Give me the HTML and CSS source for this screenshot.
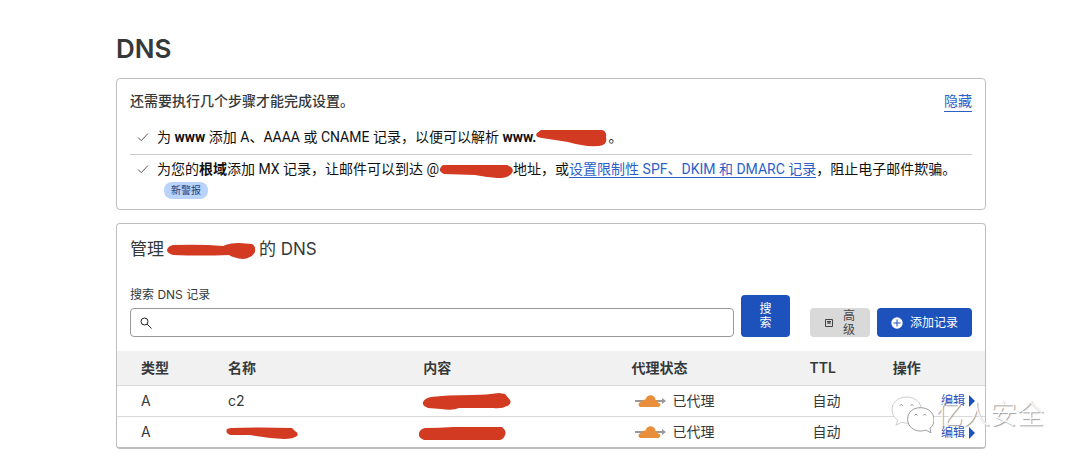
FILE: index.html
```html
<!DOCTYPE html>
<html lang="zh-CN">

<head>
    <meta charset="UTF-8">
    <meta name="viewport" content="width=device-width, initial-scale=1.0">
    <title>DNS</title>
    <link rel="stylesheet" href="styles.css">
</head>

<body>
    <main class="page">
        <h1>DNS</h1>

        <section class="card steps">
            <div class="steps-head">
                <h2>还需要执行几个步骤才能完成设置。</h2>
                <a href="#">隐藏</a>
            </div>
            <ul class="steps-list">
                <li>
                    <svg class="check" viewBox="0 0 12 12"><path d="M1 6.500l3.200 3.200L11 2.500" /></svg>
                    <p>为 <b>www</b> 添加 A、AAAA 或 CNAME 记录，以便可以解析 <b>www.</b><svg class="mark mark-host" viewBox="0 0 72 18"><path d="M5 1H66Q71 2 70 8Q72 16 63 17Q48 18 32 13L6 9Q-2 8 1 4Z" /></svg>。</p>
                </li>
                <li>
                    <svg class="check" viewBox="0 0 12 12"><path d="M1 6.500l3.200 3.200L11 2.500" /></svg>
                    <p>为您的<b>根域</b>添加 MX 记录，让邮件可以到达 @<svg class="mark mark-mail" viewBox="0 0 74 14"><path d="M4 1L68 1Q76 4 73 9Q70 14 58 14Q46 13 36 11L5 10Q-3 6 4 1Z" /></svg>地址，或<a href="#">设置限制性 SPF、DKIM 和 DMARC 记录</a>，阻止电子邮件欺骗。<br><span class="badge">新警报</span></p>
                </li>
            </ul>
        </section>

        <section class="card records">
            <h2>管理<svg class="mark mark-zone" viewBox="0 0 89 16"><path d="M6 2Q34 1 56 3Q62 0 72 0L85 1Q89 3 88 9Q85 15 76 16Q67 15 62 12Q34 13 6 12Q0 10 0 7Q1 3 6 2Z" /></svg>的 DNS</h2>

            <form class="toolbar">
                <div class="search-field">
                    <label for="search">搜索 DNS 记录</label>
                    <div class="search-box">
                        <svg viewBox="0 0 12 12"><circle cx="4.500" cy="4.500" r="3.500" /><path d="M7 7l4.500 4.500" /></svg>
                        <input type="text" id="search">
                    </div>
                </div>
                <button type="button" class="btn btn-search">搜索</button>
                <button type="button" class="btn btn-advanced">
                    <svg viewBox="0 0 8 8"><path d="M.5.5h7v7h-7z" /><path d="M2 2.500h4M2 4h4M4 2v3" /></svg>
                    <span>高级</span>
                </button>
                <button type="button" class="btn btn-add">
                    <svg viewBox="0 0 12 12"><circle cx="6" cy="6" r="5.700" /><path d="M6 2.500v7M2.500 6h7" /></svg>
                    添加记录
                </button>
            </form>

            <table>
                <thead>
                    <tr>
                        <th class="col-type">类型</th>
                        <th class="col-name">名称</th>
                        <th class="col-content">内容</th>
                        <th class="col-proxy">代理状态</th>
                        <th class="col-ttl">TTL</th>
                        <th class="col-action">操作</th>
                    </tr>
                </thead>
                <tbody>
                    <tr>
                        <td>A</td>
                        <td>c2</td>
                        <td><svg class="mark mark-ip" viewBox="0 0 88 17"><path d="M8 4Q22 2 50 2Q64 2 76 0L82 1L87 7Q89 11 84 13Q79 16 70 15H36Q30 18 18 16L5 15Q-1 13 0 9Q2 5 8 4Z" /></svg></td>
                        <td>
                            <div class="proxy">
                                <svg viewBox="0 0 31 12"><path class="arrow" d="M0 5h27v-2l4 3-4 3v-2H0z" /><path class="cloud" d="M5 12Q2.500 10 4 8Q5 7 6.500 7Q7 4 10.500 4.500Q12 0 16 .3Q20 .8 20.500 5Q23 5 23 7.500Q26.500 8 25 10.500L24 12Z" /></svg>
                                已代理
                            </div>
                        </td>
                        <td>自动</td>
                        <td><a class="edit" href="#">编辑</a></td>
                    </tr>
                    <tr>
                        <td>A</td>
                        <td><svg class="mark mark-name" viewBox="0 0 72 12"><path d="M5 1Q34 0 66 1L69 4Q73 6 71 9Q67 12 58 12Q40 11 24 8H4Q-1 6 1 2Z" /></svg></td>
                        <td><svg class="mark mark-ip2" viewBox="0 0 87 14"><path d="M6 2Q20 2 34 1H83Q88 5 86 9Q85 13 81 14H5Q-1 12 0 7Q1 3 6 2Z" /></svg></td>
                        <td>
                            <div class="proxy">
                                <svg viewBox="0 0 31 12"><path class="arrow" d="M0 5h27v-2l4 3-4 3v-2H0z" /><path class="cloud" d="M5 12Q2.500 10 4 8Q5 7 6.500 7Q7 4 10.500 4.500Q12 0 16 .3Q20 .8 20.500 5Q23 5 23 7.500Q26.500 8 25 10.500L24 12Z" /></svg>
                                已代理
                            </div>
                        </td>
                        <td>自动</td>
                        <td><a class="edit" href="#">编辑</a></td>
                    </tr>
                </tbody>
            </table>
        </section>

        <div class="watermark">
            <svg viewBox="0 0 44 38">
                <path class="back" d="M16 1C7 1 1 7 1 14c0 5 2 8 6 11l-2 5 6-3c14 4 20-5 20-13C31 6 24 1 16 1z" />
                <path d="M30 12c-8 0-13 5-13 12s6 12 13 12c3 0 5-1 6-1l5 3-1-5c3-2 4-5 4-9 0-7-6-12-14-12z" />
                <path class="eyes" d="M9 10q1.500-3 3 0M20 10q1.500-3 3 0M24 20q1.500-3 3 0M33 20q1.500-3 3 0" />
            </svg>
            <span>亿人安全</span>
        </div>
    </main>
</body>

</html>
```
FILE: styles.css
```css
* {
    box-sizing: border-box;
}

body {
    font-family: Inter, 'Noto Sans CJK SC', sans-serif;
    font-size: 14px;
    line-height: 20px;
    margin: 0;
    background-color: #fff;
    color: #36393a;
}

h1, h2, p, ul {
    margin: 0;
    padding: 0;
}

a {
    color: #2c5fc9;
    text-decoration: none;
    border-bottom: 1px solid #2c5fc9;
}

.page {
    position: relative;
    padding: 33px 94px 0 116px;
}

h1 {
    font-size: 26px;
    line-height: 32px;
    font-weight: 600;
    margin-bottom: 13px;
}

.card {
    border: 1px solid #bfbfbf;
    border-radius: 4px;
    margin-bottom: 13px;
}

.steps {
    padding: 12px 13px 10px;
    font-family: Roboto, 'Noto Sans CJK SC', sans-serif;
    color: #111;
}

.steps-head {
    display: flex;
    justify-content: space-between;
    margin-bottom: 10px;
}

.steps-head h2 {
    font-size: 14px;
    font-weight: 500;
    color: #36393a;
}

.steps-list {
    list-style: none;
}

.steps-list li {
    display: flex;
    gap: 8px;
    padding: 5px 0 7px 7px;
}

.steps-list li + li {
    border-top: 1px solid #ccc;
    padding: 4px 0 0 7px;
}

.steps-list b {
    font-weight: 700;
}

.check {
    width: 12px;
    height: 12px;
    margin-top: 4px;
    fill: none;
    stroke: #555;
    flex-shrink: 0;
}

.badge {
    display: inline-block;
    margin-left: 7px;
    padding: 0 7px;
    border-radius: 8px;
    background-color: #b9d3fb;
    color: #1d3f7c;
    font-size: 10px;
    line-height: 17px;
}

.mark {
    fill: #d23a22;
    vertical-align: middle;
}

.mark-host {
    width: 72px;
    height: 18px;
}

.mark-mail {
    width: 74px;
    height: 14px;
}

.mark-zone {
    width: 89px;
    height: 16px;
    margin: 0 3px;
}

.mark-ip {
    width: 88px;
    height: 17px;
}

.mark-ip2 {
    width: 87px;
    height: 14px;
    margin-left: -4px;
}

.mark-name {
    width: 72px;
    height: 12px;
    margin-left: -2px;
}

.records {
    border-bottom: 2px solid #bfbfbf;
    margin-bottom: 0;
}

.records h2 {
    padding: 13px 13px 0;
    font-size: 17px;
    line-height: 24px;
    font-weight: 400;
}

.toolbar {
    display: flex;
    align-items: flex-end;
    padding: 25px 13px 14px;
}

.search-field {
    flex: 1;
}

.search-field label {
    display: block;
    font-size: 12px;
    line-height: 18px;
    margin-bottom: 4px;
}

.search-box {
    display: flex;
    align-items: center;
    height: 29px;
    padding-left: 9px;
    border: 1px solid #999;
    border-radius: 4px;
}

.search-box svg {
    width: 12px;
    height: 12px;
    fill: none;
    stroke: #222;
}

.search-box input {
    flex: 1;
    border: none;
    outline: none;
    font-size: 14px;
    background: none;
}

.btn {
    border: none;
    border-radius: 4px;
    font-family: inherit;
    font-size: 12px;
    line-height: 14px;
    color: #fff;
    background-color: #1d52bd;
    cursor: pointer;
}

.btn-search {
    width: 49px;
    height: 42px;
    margin-left: 7px;
    padding: 0 18px;
}

.btn-advanced {
    display: flex;
    align-items: center;
    justify-content: space-between;
    width: 60px;
    height: 29px;
    margin-left: 20px;
    padding: 0 15px;
    background-color: #d9d9d9;
    color: #444;
}

.btn-advanced svg {
    width: 8px;
    height: 8px;
    fill: none;
    stroke: #444;
}

.btn-advanced span {
    width: 12px;
}

.btn-add {
    display: flex;
    align-items: center;
    gap: 7px;
    height: 29px;
    margin-left: 7px;
    padding: 0 14px;
}

.btn-add svg {
    width: 12px;
    height: 12px;
    fill: #fff;
    stroke: #1d52bd;
}

.btn-add circle {
    stroke: none;
}

table {
    width: 100%;
    border-collapse: collapse;
    table-layout: fixed;
}

th {
    height: 34px;
    padding: 0 0 0 12px;
    background-color: #f1f1f1;
    font-weight: 600;
    text-align: left;
}

td {
    height: 31px;
    padding: 0 0 0 12px;
    border-top: 1px solid #d9d9d9;
}

th:first-child, td:first-child {
    padding-left: 24px;
}

td:nth-child(4), td:nth-child(5) {
    padding-left: 15px;
}

td:last-child {
    padding-right: 10px;
    text-align: right;
}

.col-type {
    width: 11.4%;
}

.col-name {
    width: 22.5%;
}

.col-content {
    width: 24%;
}

.col-proxy {
    width: 20.5%;
}

.col-ttl {
    width: 9.6%;
}

.proxy {
    display: flex;
    align-items: center;
    gap: 7px;
}

.proxy svg {
    width: 31px;
    height: 12px;
}

.arrow {
    fill: #999;
}

.cloud {
    fill: #e98f3c;
}

.edit {
    display: inline-flex;
    align-items: center;
    gap: 4px;
    border: none;
    font-size: 12px;
    color: #1d52bd;
    vertical-align: middle;
}

.edit::after {
    content: '';
    border-left: 6px solid #1d52bd;
    border-top: 6px solid transparent;
    border-bottom: 6px solid transparent;
}

/* account watermark over the bottom right corner */
.watermark {
    position: absolute;
    right: 36px;
    bottom: 16px;
    display: flex;
    align-items: center;
    gap: 2px;
    font-size: 27px;
    line-height: 36px;
    font-weight: 300;
    color: #fff;
    text-shadow: 1px 1px 1px #999;
    pointer-events: none;
}

.watermark svg {
    width: 43px;
    height: 37px;
    fill: #fff;
    stroke: #999;
}

.watermark .back {
    stroke: #ccc;
}

.watermark .eyes {
    fill: none;
    stroke: #888;
}
```
